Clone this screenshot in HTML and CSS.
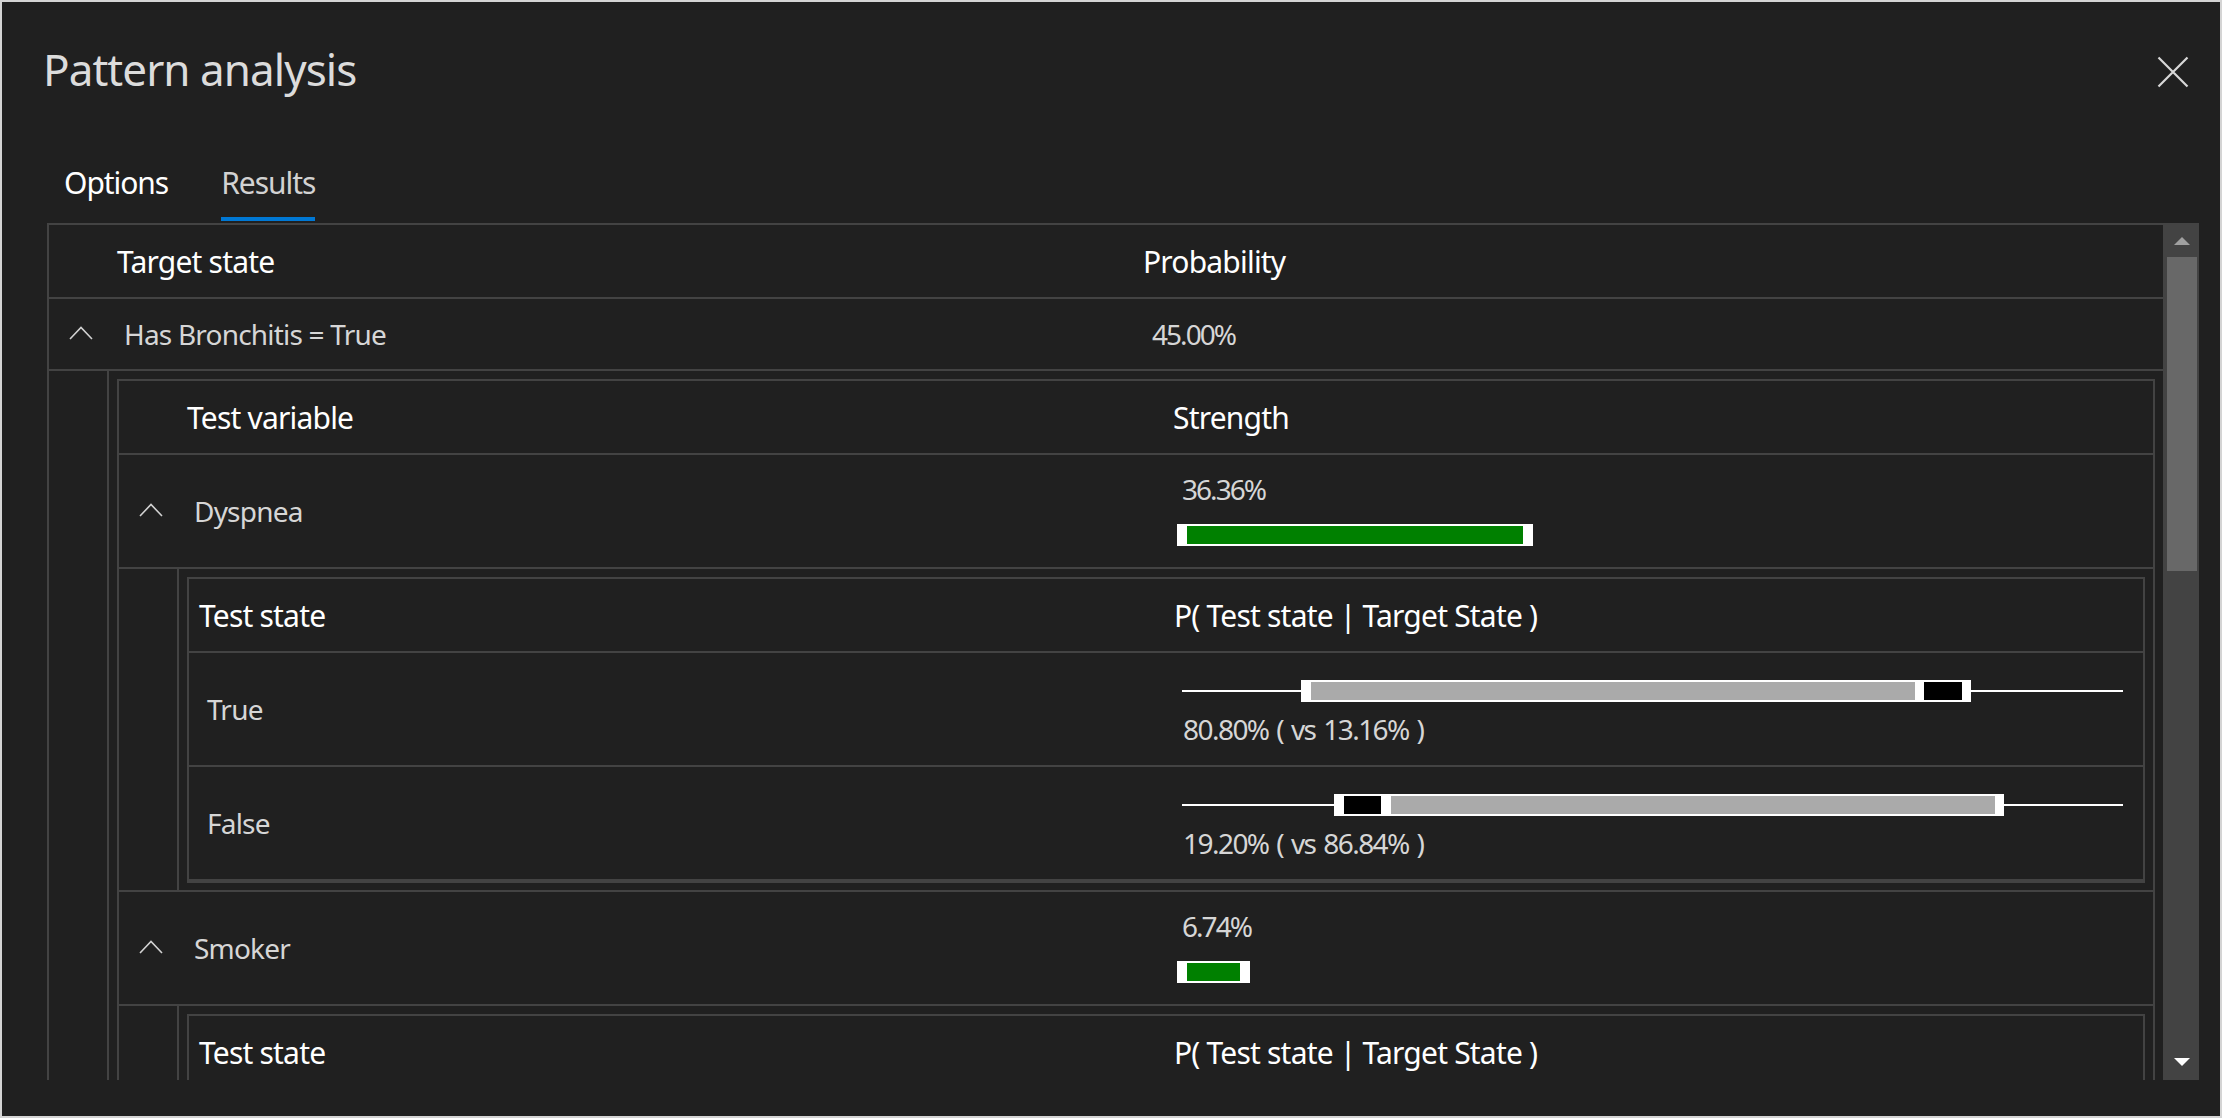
FILE: index.html
```html
<!DOCTYPE html>
<html lang="en">
<head>
<meta charset="utf-8">
<title>Pattern analysis</title>
<link rel="stylesheet" href="styles.css">
</head>
<body>
<div class="dialog">
  <header class="titlebar">
    <h1 class="title">Pattern analysis</h1>
    <button class="close" aria-label="Close">
      <svg width="32" height="32" viewBox="0 0 32 32"><path d="M1.5 1.5 L30.5 30.5 M30.5 1.5 L1.5 30.5" stroke="#d8d8d8" stroke-width="2.2" fill="none"/></svg>
    </button>
  </header>
  <nav class="tabs">
    <div class="tab">Options</div>
    <div class="tab active">Results</div>
  </nav>
  <div class="frame">
    <div class="viewport">
      <div class="tbl-outer">
        <div class="row head">
          <div class="gut"></div>
          <div class="hc">Target state</div>
          <div class="hc hc2">Probability</div>
        </div>
        <div class="row r-target">
          <div class="gut"><svg class="chev" width="24" height="14" viewBox="0 0 24 14"><polyline points="1,13 12,1.5 23,13" fill="none" stroke="#d2d2d2" stroke-width="1.6"/></svg></div>
          <div class="dc">Has Bronchitis = True</div>
          <div class="dc dc2 num">45.00%</div>
        </div>
        <div class="detail">
          <div class="gut"></div>
          <div class="detail-body">
            <div class="tbl">
              <div class="row head">
                <div class="gut"></div>
                <div class="hc">Test variable</div>
                <div class="hc hc2">Strength</div>
              </div>
              <div class="row r-var">
                <div class="gut"><svg class="chev" width="24" height="14" viewBox="0 0 24 14"><polyline points="1,13 12,1.5 23,13" fill="none" stroke="#d2d2d2" stroke-width="1.6"/></svg></div>
                <div class="dc">Dyspnea</div>
                <div class="sc">
                  <div class="val num">36.36%</div>
                  <div class="sbar" style="width:356px"><div class="fill"></div></div>
                </div>
              </div>
              <div class="detail">
                <div class="gut"></div>
                <div class="detail-body">
                  <div class="tbl tbl-inner">
                    <div class="row head">
                      <div class="hc">Test state</div>
                      <div class="hc hc2">P( Test state | Target State )</div>
                    </div>
                    <div class="row r-state">
                      <div class="dc dc-in">True</div>
                      <div class="rc">
                        <div class="track">
                          <div class="ln" style="width:119px"></div>
                          <div class="rbox">
                            <div class="gray" style="width:604px"></div>
                            <div class="blk" style="width:38px"></div>
                          </div>
                          <div class="ln end"></div>
                        </div>
                        <div class="rtxt">80.80% ( vs 13.16% )</div>
                      </div>
                    </div>
                    <div class="row r-state">
                      <div class="dc dc-in">False</div>
                      <div class="rc">
                        <div class="track">
                          <div class="ln" style="width:152px"></div>
                          <div class="rbox wide-gap">
                            <div class="blk" style="width:37px"></div>
                            <div class="gray" style="width:604px"></div>
                          </div>
                          <div class="ln end"></div>
                        </div>
                        <div class="rtxt">19.20% ( vs 86.84% )</div>
                      </div>
                    </div>
                  </div>
                </div>
              </div>
              <div class="row r-var">
                <div class="gut"><svg class="chev" width="24" height="14" viewBox="0 0 24 14"><polyline points="1,13 12,1.5 23,13" fill="none" stroke="#d2d2d2" stroke-width="1.6"/></svg></div>
                <div class="dc">Smoker</div>
                <div class="sc">
                  <div class="val num">6.74%</div>
                  <div class="sbar" style="width:73px"><div class="fill"></div></div>
                </div>
              </div>
              <div class="detail">
                <div class="gut"></div>
                <div class="detail-body">
                  <div class="tbl tbl-inner">
                    <div class="row head">
                      <div class="hc">Test state</div>
                      <div class="hc hc2">P( Test state | Target State )</div>
                    </div>
                  </div>
                </div>
              </div>
            </div>
          </div>
        </div>
      </div>
    </div>
    <div class="scrollbar">
      <div class="sb-btn up"><span class="tri-up"></span></div>
      <div class="sb-thumb"></div>
      <div class="sb-track"></div>
      <div class="sb-btn down"><span class="tri-down"></span></div>
    </div>
  </div>
</div>
</body>
</html>
```

FILE: styles.css
```css
* { box-sizing: border-box; }

html, body {
  margin: 0;
  background: #202020;
}

body {
  font-family: "Noto Sans", "Open Sans", sans-serif;
  letter-spacing: -0.05em;
  color: #d6d6d6;
}

.dialog {
  width: 2222px;
  height: 1118px;
  border: 2px solid #d4d4d4;
  background: #202020;
  display: flex;
  flex-direction: column;
  overflow: hidden;
}

.titlebar {
  display: flex;
  justify-content: space-between;
  align-items: flex-start;
  padding: 36px 31px 0 41px;
}

.title {
  margin: 0;
  font-size: 44px;
  line-height: 62px;
  letter-spacing: -0.95px;
  font-weight: 400;
  color: #dcdcdc;
}

.close {
  margin-top: 18px;
  width: 32px;
  height: 32px;
  padding: 0;
  border: 0;
  background: none;
  display: block;
}

.close svg { display: block; }

.tabs {
  display: flex;
  gap: 53px;
  padding-left: 62px;
  margin-top: 63px;
}

.tab {
  font-size: 30px;
  line-height: 40px;
  letter-spacing: -1.05px;
  padding-bottom: 14px;
  border-bottom: 4px solid transparent;
  color: #ffffff;
}

.tab.active {
  border-bottom-color: #0078d4;
  color: #d2d2d2;
}

.frame {
  margin: 2px 21px 0 45px;
  height: 857px;
  border-top: 2px solid #434343;
  border-left: 2px solid #434343;
  display: flex;
}

.viewport {
  flex: 1;
  min-width: 0;
  overflow: hidden;
}

/* tables */
.tbl {
  border: 2px solid #434343;
}

.row {
  display: grid;
  grid-template-columns: 58px 1fr 1fr;
  border-bottom: 2px solid #434343;
}

.tbl-inner .row {
  grid-template-columns: 1fr 1fr;
}

.row.head { height: 74px; }
.row.r-target { height: 72px; }
.row.r-var { height: 114px; }
.row.r-state { height: 114px; }

.detail {
  display: grid;
  grid-template-columns: 58px 1fr;
  border-bottom: 2px solid #434343;
}

.detail-body {
  border-left: 2px solid #434343;
  padding: 8px 8px 7px 8px;
  min-width: 0;
}

.gut {
  display: flex;
  align-items: center;
}

.chev {
  display: block;
  margin-left: 20px;
  margin-top: -3px;
}

.hc {
  display: flex;
  align-items: center;
  font-size: 30px;
  color: #ffffff;
  padding-left: 10px;
  white-space: nowrap;
}

.hc2 { padding-left: 8px; }

.dc {
  display: flex;
  align-items: center;
  font-size: 28px;
  color: #d6d6d6;
  padding-left: 17px;
  white-space: nowrap;
}

.dc2 { padding-left: 17px; }
.dc-in { padding-left: 18px; }

.num { letter-spacing: -0.07em; }

/* strength */
.sc {
  font-size: 28px;
  color: #d6d6d6;
  padding: 15px 0 0 12px;
}

.sc .val {
  line-height: 38px;
  padding-left: 5px;
}

.sbar {
  margin-top: 16px;
  height: 22px;
  background: #ffffff;
  padding: 2px 10px;
}

.sbar .fill {
  height: 100%;
  background: #008000;
}

/* range */
.rc {
  font-size: 28px;
  color: #d6d6d6;
  padding: 27px 20px 0 16px;
}

.track {
  display: flex;
  align-items: center;
  height: 22px;
}

.ln {
  height: 2px;
  background: #ffffff;
  flex: none;
}

.ln.end { flex: 1; }

.rbox {
  display: flex;
  flex: none;
  height: 22px;
  background: #ffffff;
  padding: 2px 9px 2px 10px;
  gap: 9px;
}

.rbox.wide-gap { gap: 10px; }

.gray {
  height: 100%;
  background: #aaaaaa;
}

.blk {
  height: 100%;
  background: #000000;
}

.rtxt {
  margin-top: 8px;
  line-height: 38px;
  padding-left: 1px;
  letter-spacing: -0.055em;
  word-spacing: 2px;
  white-space: nowrap;
}

/* scrollbar */
.scrollbar {
  width: 36px;
  flex: none;
  background: #434343;
  display: flex;
  flex-direction: column;
}

.sb-btn {
  height: 32px;
  display: flex;
  align-items: center;
  justify-content: center;
  flex: none;
}

.sb-btn.down { height: 36px; }

.tri-up {
  width: 0;
  height: 0;
  margin-left: 2px;
  border-left: 8px solid transparent;
  border-right: 8px solid transparent;
  border-bottom: 8px solid #a0a0a0;
}

.tri-down {
  width: 0;
  height: 0;
  margin-left: 2px;
  border-left: 8px solid transparent;
  border-right: 8px solid transparent;
  border-top: 8px solid #ffffff;
}

.sb-thumb {
  height: 314px;
  margin: 0 2px 0 4px;
  background: #686868;
  flex: none;
}

.sb-track { flex: 1; }
```
